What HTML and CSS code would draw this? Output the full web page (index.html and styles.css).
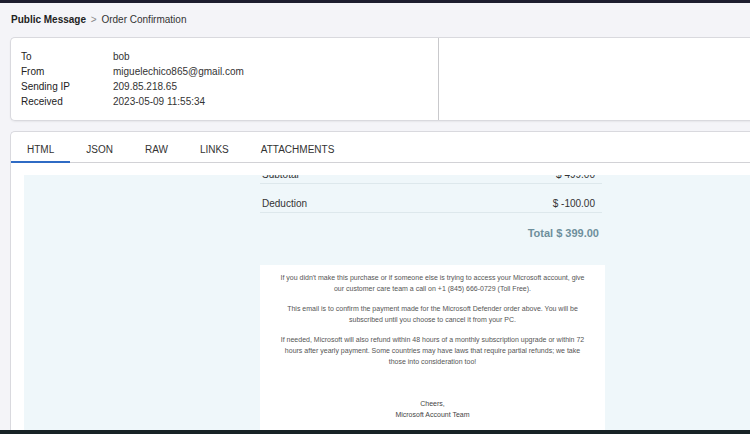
FILE: index.html
```html
<!DOCTYPE html>
<html lang="en">
<head>
    <meta charset="UTF-8">
    <meta name="viewport" content="width=device-width, initial-scale=1.0">
    <title>Order Confirmation</title>
    <link rel="stylesheet" href="styles.css">
</head>
<body>
    <div class="topbar"></div>

    <div class="page">
        <div class="crumbs">
            <b>Public Message</b>
            <span class="sep">&gt;</span>
            <span>Order Confirmation</span>
        </div>

        <!-- message headers -->
        <div class="card head-card">
            <div class="meta">
                <div class="row"><span class="label">To</span><span>bob</span></div>
                <div class="row"><span class="label">From</span><span>miguelechico865@gmail.com</span></div>
                <div class="row"><span class="label">Sending IP</span><span>209.85.218.65</span></div>
                <div class="row"><span class="label">Received</span><span>2023-05-09 11:55:34</span></div>
            </div>
            <div class="side"></div>
        </div>

        <div class="card body-card">
            <div class="tabs">
                <div class="tab active">HTML</div>
                <div class="tab">JSON</div>
                <div class="tab">RAW</div>
                <div class="tab">LINKS</div>
                <div class="tab">ATTACHMENTS</div>
            </div>

            <div class="viewer">
                <div class="mail">
                    <div class="line"><span>Subtotal</span><span>$ 499.00</span></div>
                    <div class="line"><span>Deduction</span><span>$ -100.00</span></div>
                    <div class="total">Total $ 399.00</div>

                    <div class="notes">
                        <p>If you didn't make this purchase or if someone else is trying to access your Microsoft account, give our customer care team a call on +1 (845) 666-0729 (Toll Free).</p>
                        <p>This email is to confirm the payment made for the Microsoft Defender order above. You will be subscribed until you choose to cancel it from your PC.</p>
                        <p>If needed, Microsoft will also refund within 48 hours of a monthly subscription upgrade or within 72 hours after yearly payment. Some countries may have laws that require partial refunds; we take those into consideration too!</p>
                        <p class="sign">Cheers,<br>Microsoft Account Team</p>
                    </div>
                </div>
            </div>
        </div>
    </div>

    <div class="bottombar"></div>
</body>
</html>
```

FILE: styles.css
```css
html, body {
    margin: 0;
    height: 100%;
}
body {
    font-family: "Liberation Sans", Arial, sans-serif;
    font-size: 10px;
    color: #333;
    background: #f4f4f8;
    display: flex;
    flex-direction: column;
    overflow: hidden;
}
.topbar {
    height: 3px;
    background: #1d1d2f;
}
.bottombar {
    height: 4px;
    background: #182326;
}
.page {
    flex: 1;
    min-height: 0;
    display: flex;
    flex-direction: column;
    padding-left: 10px;
}
.crumbs {
    height: 34px;
    line-height: 34px;
    padding-left: 1px;
    color: #333;
}
.crumbs b {
    color: #222;
}
.crumbs .sep {
    color: #888;
    margin: 0 2px;
}
.card {
    background: #fff;
    border: 1px solid #d9d9de;
    border-right: none;
    margin-right: -20px;
}
.head-card {
    display: flex;
    border-radius: 5px;
    box-shadow: 0 1px 2px rgba(0, 0, 0, 0.06);
}
.meta {
    width: 407px;
    padding: 11px 10px 11px;
    border-right: 1px solid #c9c9cc;
}
.side {
    flex: 1;
}
.row {
    display: flex;
    line-height: 15px;
    color: #333;
}
.label {
    width: 92px;
    color: #222;
}
.body-card {
    margin-top: 10px;
    flex: 1;
    min-height: 0;
    border-bottom: none;
    border-radius: 5px 0 0 0;
    display: flex;
    flex-direction: column;
}
.tabs {
    display: flex;
    border-bottom: 1px solid #d2d2d6;
    height: 30px;
}
.tab {
    padding: 12px 16px 0;
    color: #333;
    line-height: 12px;
}
.tab.active {
    border-bottom: 2px solid #2f6bc4;
    margin-bottom: -1px;
}
.viewer {
    flex: 1;
    min-height: 0;
    margin: 12px 0 0 13px;
    background: #eff7fa;
    overflow: hidden;
}
.mail {
    width: 345px;
    margin: -20px 0 0 236px;
}
.line {
    box-sizing: border-box;
    display: flex;
    justify-content: space-between;
    align-items: flex-end;
    height: 29px;
    padding: 0 7px 2px 2px;
    margin-right: 3px;
    border-bottom: 1px solid #dde8ec;
    color: #333;
    line-height: 12px;
}
.total {
    box-sizing: border-box;
    text-align: right;
    padding: 14px 6px 0 0;
    height: 52px;
    font-size: 11px;
    font-weight: bold;
    color: #6e8f9c;
}
.notes {
    background: #fff;
    padding: 7px 17px 30px;
    font-size: 7px;
    line-height: 11px;
    color: #555;
    text-align: center;
}
.notes p {
    margin: 0 0 9px;
}
.notes .sign {
    margin-top: 31px;
    color: #444;
}
```
